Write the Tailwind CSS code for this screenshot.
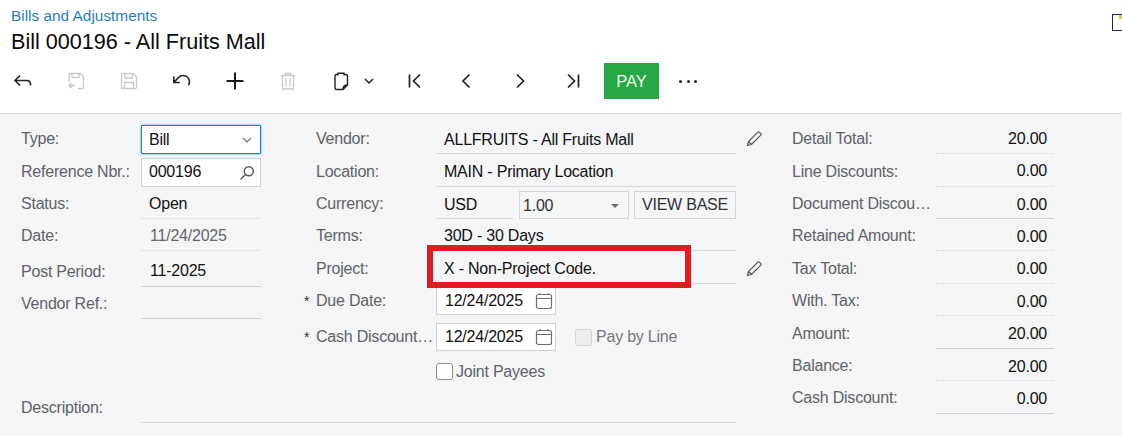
<!DOCTYPE html>
<html>
<head>
<meta charset="utf-8">
<script src="https://cdn.jsdelivr.net/npm/@tailwindcss/browser@4"></script>
</head>
<body class="m-0 overflow-hidden bg-[#f3f5f7] font-['Liberation_Sans',Arial,sans-serif] text-[16px] tracking-[-0.22px] text-[#111]">
<div class="relative h-[436px] w-[1122px] overflow-hidden">
  <header class="relative h-[114px] border-b border-[#d2d4d7] bg-white">
    <div class="pl-[11px] pt-[7px] text-[15.4px] leading-[17px] tracking-normal text-[#1f7fbb]">Bills and Adjustments</div>
    <div class="pl-[11px] pt-[4px] text-[21.6px] leading-[28px] tracking-normal text-[#0a0a0a]">Bill 000196 - All Fruits Mall</div>
    <div class="mt-[7px] flex h-[36px] items-center">
      <div class="flex w-[49px] justify-center">
        <svg class="-ml-[3px]" width="20" height="20" viewBox="0 0 20 20" fill="none" stroke="#222" stroke-width="1.6"><path d="M7 4.500 2 9.500l5 5M2 9.500h11.500c2.500 0 4 1.200 4 3.500v1.500"/></svg>
      </div>
      <div class="flex w-[53px] justify-center">
        <svg width="20" height="20" viewBox="0 0 20 20" fill="none" stroke="#c6c8cb" stroke-width="1.3"><path d="M3 11V3.500C3 3 3.300 2.500 4 2.500h10l3.500 3v11c0 .6-.4 1-1 1H12M6 2.500v4h7v-4M9 14.500H3M5.500 12 3 14.500 5.500 17"/></svg>
      </div>
      <div class="flex w-[53px] justify-center">
        <svg width="20" height="20" viewBox="0 0 20 20" fill="none" stroke="#c6c8cb" stroke-width="1.3"><path d="M2.500 3.500c0-.6.4-1 1-1H14l3.500 3.200v10.800c0 .6-.4 1-1 1h-13c-.6 0-1-.4-1-1zM6 2.500V7h7.500V2.500M5.500 17.500V11.500h9v6"/></svg>
      </div>
      <div class="flex w-[53px] justify-center">
        <svg width="20" height="20" viewBox="0 0 20 20" fill="none" stroke="#222" stroke-width="1.6"><path d="M1.800 5.500v6h6M2 11.300 6.500 6.500c1.200-1.200 2.600-2 4.500-2 3.600 0 6.500 2.700 6.500 6 0 1.400-.4 2.600-1.100 3.800"/></svg>
      </div>
      <div class="flex w-[53px] justify-center">
        <svg width="20" height="20" viewBox="0 0 20 20" fill="none" stroke="#1a1a1a" stroke-width="2"><path d="M10 1.500v17M1.500 10h17"/></svg>
      </div>
      <div class="flex w-[53px] justify-center">
        <svg width="20" height="20" viewBox="0 0 20 20" fill="none" stroke="#c6c8cb" stroke-width="1.3"><path d="M3 4.500h14M7.500 4.500V2.500h5v2M4.500 4.500v13.500h11V4.500M8 7.500v8M12 7.500v8"/></svg>
      </div>
      <div class="flex w-[53px] justify-center">
        <svg width="20" height="20" viewBox="0 0 20 20" fill="none" stroke="#222" stroke-width="1.4"><path d="M7 4.500V2.300h6v2.200M7 3.500H5.500c-1 0-1.500.6-1.500 1.500v12c0 1 .5 1.500 1.500 1.500h6.500l4.500-4.500V5c0-.9-.5-1.500-1.500-1.500H13M12 18.500c-.3-2.800 1.200-4.500 4.500-4.500"/></svg>
      </div>
      <div class="-ml-[3px] flex w-[10px] justify-center">
        <svg width="10" height="7" viewBox="0 0 10 7" fill="none" stroke="#222" stroke-width="1.5"><path d="M1 1l4 4 4-4"/></svg>
      </div>
      <div class="flex w-[66px] justify-center pl-[17px]">
        <svg width="20" height="20" viewBox="0 0 20 20" fill="none" stroke="#222" stroke-width="1.7"><path d="M3.500 3.500v13M14 3.500 7.500 10l6.500 6.500"/></svg>
      </div>
      <div class="flex w-[53px] justify-center">
        <svg width="20" height="20" viewBox="0 0 20 20" fill="none" stroke="#222" stroke-width="1.7"><path d="M12.500 3.500 6 10l6.500 6.500"/></svg>
      </div>
      <div class="flex w-[53px] justify-center">
        <svg width="20" height="20" viewBox="0 0 20 20" fill="none" stroke="#222" stroke-width="1.7"><path d="M7 3.500l6.500 6.500L7 16.500"/></svg>
      </div>
      <div class="flex w-[52px] justify-center">
        <svg width="20" height="20" viewBox="0 0 20 20" fill="none" stroke="#222" stroke-width="1.7"><path d="M16.500 3.500v13M6 3.500l6.500 6.500L6 16.500"/></svg>
      </div>
      <div class="ml-[6px] flex h-[36px] w-[55px] items-center justify-center bg-[#28a745] text-[16.5px] tracking-normal text-[#eef8f0]">PAY</div>
      <div class="ml-[19px] flex w-[20px] justify-between px-px">
        <span class="size-[3px] rounded-full bg-[#222]"></span><span class="size-[3px] rounded-full bg-[#222]"></span><span class="size-[3px] rounded-full bg-[#222]"></span>
      </div>
    </div>
    <div class="absolute left-[1112px] top-[14px] h-[17px] w-[16px] border border-[#2c1f5e]"></div>
    <div class="absolute left-[1119px] top-[15px] h-[4px] w-[3px] bg-[#e6c64b]"></div>
  </header>

  <main class="relative flex h-[322px]">
    <!-- left column -->
    <section class="w-[295px] pl-[21px] pt-[8px]">
      <div class="flex h-[32px] items-end">
        <label class="w-[120px] self-center pt-[1px] text-[#5f6368]">Type:</label>
        <div class="flex h-[29px] w-[120px] items-center justify-between rounded-[1px] border border-[#1383c4] bg-white pl-[7px] pr-[8px] shadow-[0_0_2px_#1383c4]">
          <span>Bill</span>
          <svg width="10" height="6" viewBox="0 0 10 6" fill="none" stroke="#6b7075" stroke-width="1.2"><path d="M1 1l4 4 4-4"/></svg>
        </div>
      </div>
      <div class="flex h-[33px] items-end">
        <label class="w-[120px] self-center pt-[2px] text-[#5f6368]">Reference Nbr.:</label>
        <div class="flex h-[29px] w-[120px] items-center justify-between border border-[#ced1d4] bg-white pl-[7px] pr-[5px]">
          <span class="pb-[1px]">000196</span>
          <svg width="16" height="16" viewBox="0 0 16 16" fill="none" stroke="#55595d" stroke-width="1.4"><circle cx="9.800" cy="6.200" r="4.500"/><path d="M6.500 9.500 1.500 14.500"/></svg>
        </div>
      </div>
      <div class="flex h-[32px] items-center">
        <label class="w-[120px] pt-[2px] text-[#5f6368]">Status:</label>
        <div class="flex h-full w-[120px] items-center border-b border-dotted border-[#d3d5d8] pl-[8px] pt-[3px]">Open</div>
      </div>
      <div class="flex h-[32px] items-center">
        <label class="w-[120px] pt-[1px] text-[#5f6368]">Date:</label>
        <div class="flex h-full w-[120px] items-center border-b border-dotted border-[#d3d5d8] pl-[9px] pt-[3px] text-[#63676b]">11/24/2025</div>
      </div>
      <div class="flex h-[36px] items-center">
        <label class="w-[120px] pt-[5px] text-[#5f6368]">Post Period:</label>
        <div class="flex h-full w-[120px] items-center border-b border-[#cfd1d4] pl-[9px] pt-[5px]">11-2025</div>
      </div>
      <div class="flex h-[32px] items-center">
        <label class="w-[120px] pt-[2px] text-[#5f6368]">Vendor Ref.:</label>
        <div class="h-full w-[120px] border-b border-[#cfd1d4]"></div>
      </div>
    </section>

    <!-- middle column -->
    <section class="relative w-[497px] pt-[8px]">
      <div class="flex h-[32px]">
        <label class="w-[141px] pl-[21px] pt-[5px] text-[#5f6368]">Vendor:</label>
        <div class="flex w-[300px] items-center border-b border-[#d6d8da] pl-[8px] pt-[4px]">ALLFRUITS - All Fruits Mall</div>
        <svg class="ml-[10px] mt-[9px]" width="16" height="16" viewBox="0 0 16 16" fill="none" stroke="#55595d" stroke-width="1.2"><path d="M1.500 14.500l1-4L11.800 1.200c.5-.5 1-.5 1.500 0l1.500 1.500c.5.500.5 1 0 1.500L5.500 13.500zM2.500 10.500l3 3"/></svg>
      </div>
      <div class="flex h-[33px]">
        <label class="w-[141px] pl-[21px] pt-[6px] text-[#5f6368]">Location:</label>
        <div class="flex w-[300px] items-center border-b border-[#d6d8da] pl-[8px] pt-[3px]">MAIN - Primary Location</div>
      </div>
      <div class="flex h-[32px]">
        <label class="w-[141px] pl-[21px] pt-[5px] text-[#5f6368]">Currency:</label>
        <div class="flex w-[77px] items-center border-b border-[#d6d8da] pl-[8px] pt-[4px]">USD</div>
        <div class="ml-[6px] mt-[4px] flex h-[28px] w-[110px] items-center justify-between border border-[#d3d5d8] pl-[3px] pr-[9px] pt-[1px] text-[#333]">
          <span>1.00</span>
          <span class="size-0 border-x-[4px] border-t-[4px] border-x-transparent border-t-[#6b7075]"></span>
        </div>
        <div class="ml-[5px] mt-[4px] flex h-[28px] w-[102px] items-center justify-center border border-[#d3d5d8] text-[#333]">VIEW BASE</div>
      </div>
      <div class="flex h-[32px]">
        <label class="w-[141px] pl-[21px] pt-[5px] text-[#5f6368]">Terms:</label>
        <div class="flex w-[300px] items-center border-b border-[#d6d8da] pl-[8px] pt-[3px]">30D - 30 Days</div>
      </div>
      <div class="flex h-[33px]">
        <label class="w-[141px] pl-[21px] pt-[6px] text-[#5f6368]">Project:</label>
        <div class="flex w-[300px] items-center border-b border-[#d6d8da] pl-[8px] pt-[3px]">X - Non-Project Code.</div>
        <svg class="ml-[10px] mt-[10px]" width="16" height="16" viewBox="0 0 16 16" fill="none" stroke="#55595d" stroke-width="1.2"><path d="M1.500 14.500l1-4L11.800 1.200c.5-.5 1-.5 1.500 0l1.500 1.500c.5.500.5 1 0 1.500L5.500 13.500zM2.500 10.500l3 3"/></svg>
      </div>
      <div class="flex h-[31px] items-end">
        <label class="relative w-[141px] self-start pl-[21px] pt-[5px] text-[#5f6368]"><span class="absolute left-[9px] top-[7px] text-[14px] text-[#333]">*</span>Due Date:</label>
        <div class="flex h-[28px] w-[120px] items-center justify-between border border-[#ced1d4] bg-white pl-[8px] pr-[2px]">
          <span>12/24/2025</span>
          <svg width="18" height="18" viewBox="0 0 18 18" fill="none" stroke="#6b6f73" stroke-width="1.2"><rect x="1.500" y="2.500" width="15" height="14" rx="2"/><path d="M1.500 6.500h15M5 1v2M13 1v2"/></svg>
        </div>
      </div>
      <div class="flex h-[36px] items-end">
        <label class="relative w-[141px] self-start pl-[21px] pt-[10px] text-[#5f6368]"><span class="absolute left-[9px] top-[12px] text-[14px] text-[#333]">*</span><span class="block w-[118px] overflow-hidden whitespace-nowrap">Cash Discount…</span></label>
        <div class="flex h-[28px] w-[120px] items-center justify-between border border-[#ced1d4] bg-white pl-[8px] pr-[2px]">
          <span>12/24/2025</span>
          <svg width="18" height="18" viewBox="0 0 18 18" fill="none" stroke="#6b6f73" stroke-width="1.2"><rect x="1.500" y="2.500" width="15" height="14" rx="2"/><path d="M1.500 6.500h15M5 1v2M13 1v2"/></svg>
        </div>
        <div class="ml-[19px] flex h-[28px] items-center gap-[4px] text-[#75797d]">
          <span class="size-[17px] rounded-[3px] border border-[#d3d5d8] bg-[#eceef0]"></span>Pay by Line
        </div>
      </div>
      <div class="flex h-[36px] items-center pl-[141px] pt-[5px]">
        <div class="flex items-center gap-[3px] text-[#5f6368]">
          <span class="size-[17px] rounded-[3px] border border-[#8a8e92] bg-white"></span>Joint Payees
        </div>
      </div>
    </section>

    <!-- right column -->
    <section class="w-[330px] pt-[8px]">
      <div class="flex h-[32px]"><label class="w-[144px] pt-[5px] text-[#5f6368]">Detail Total:</label><div class="flex w-[118px] items-center justify-end border-b border-dotted border-[#d3d5d8] pr-[7px] pt-[3px]">20.00</div></div>
      <div class="flex h-[33px]"><label class="w-[144px] pt-[6px] text-[#5f6368]">Line Discounts:</label><div class="flex w-[118px] items-center justify-end border-b border-dotted border-[#d3d5d8] pr-[7px] pt-[2px]">0.00</div></div>
      <div class="flex h-[32px]"><label class="w-[144px] overflow-hidden whitespace-nowrap pt-[5px] text-[#5f6368]">Document Discou…</label><div class="flex w-[118px] items-center justify-end border-b border-[#cfd1d4] pr-[7px] pt-[5px]">0.00</div></div>
      <div class="flex h-[32px]"><label class="w-[144px] pt-[5px] text-[#5f6368]">Retained Amount:</label><div class="flex w-[118px] items-center justify-end border-b border-dotted border-[#d3d5d8] pr-[7px] pt-[5px]">0.00</div></div>
      <div class="flex h-[33px]"><label class="w-[144px] pt-[6px] text-[#5f6368]">Tax Total:</label><div class="flex w-[118px] items-center justify-end border-b border-dotted border-[#d3d5d8] pr-[7px] pt-[3px]">0.00</div></div>
      <div class="flex h-[32px]"><label class="w-[144px] pt-[5px] text-[#5f6368]">With. Tax:</label><div class="flex w-[118px] items-center justify-end border-b border-dotted border-[#d3d5d8] pr-[7px] pt-[5px]">0.00</div></div>
      <div class="flex h-[33px]"><label class="w-[144px] pt-[6px] text-[#5f6368]">Amount:</label><div class="flex w-[118px] items-center justify-end border-b border-[#cfd1d4] pr-[7px] pt-[3px]">20.00</div></div>
      <div class="flex h-[32px]"><label class="w-[144px] pt-[5px] text-[#5f6368]">Balance:</label><div class="flex w-[118px] items-center justify-end border-b border-dotted border-[#d3d5d8] pr-[7px] pt-[5px]">20.00</div></div>
      <div class="flex h-[33px]"><label class="w-[144px] pt-[5px] text-[#5f6368]">Cash Discount:</label><div class="flex w-[118px] items-center justify-end border-b border-[#cfd1d4] pr-[7px] pt-[3px]">0.00</div></div>
    </section>

    <!-- description row -->
    <div class="absolute left-[21px] top-[284px] flex h-[25px] items-start">
      <label class="-mt-[2px] w-[120px] text-[#5f6368]">Description:</label>
      <div class="h-[25px] w-[595px] border-b border-[#d6d8da]"></div>
    </div>
    <!-- red annotation -->
    <div class="absolute left-[427px] top-[131px] h-[43px] w-[264px] border-[6px] border-[#e21c21]"></div>
  </main>
</div>
</body>
</html>
